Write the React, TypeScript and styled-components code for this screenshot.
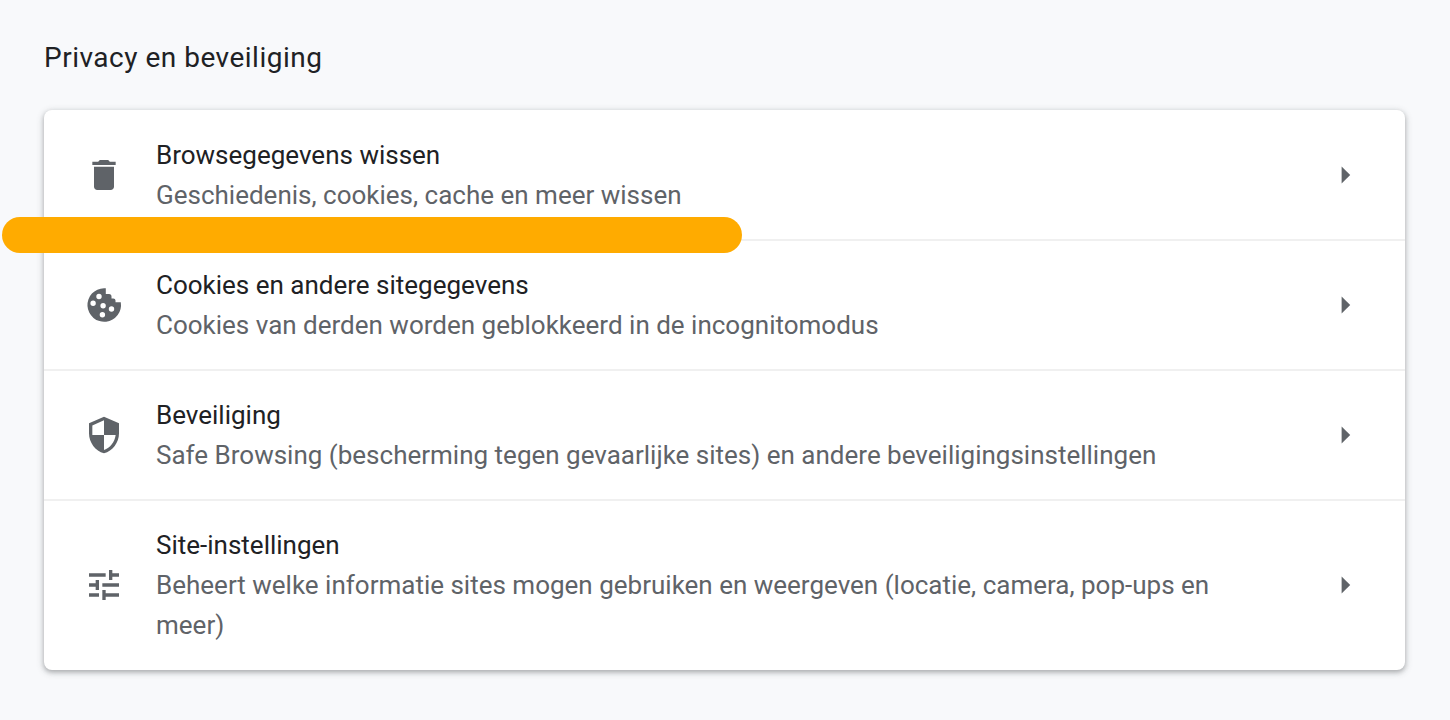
import React from "react";
import styled, { createGlobalStyle } from "styled-components";

const GlobalStyle = createGlobalStyle`
  * { box-sizing: border-box; }
  body {
    margin: 0;
    background: #f8f9fb;
    color: #202124;
    font-family: Roboto, "Liberation Sans", sans-serif;
    font-size: 26px;
    line-height: 40px;
  }
`;

const Page = styled.main`
  padding: 38px 45px 50px 44px;
`;

const Heading = styled.h2`
  margin: 0 0 32px;
  font-size: 28px;
  font-weight: 400;
  line-height: 40px;
  letter-spacing: 0.5px;
`;

const Card = styled.ul`
  list-style: none;
  margin: 0;
  padding: 1px 0;
  background: #fff;
  border-radius: 8px;
  box-shadow: 0 2px 4px rgba(60, 64, 67, 0.3), 0 2px 6px 2px rgba(60, 64, 67, 0.15);
`;

const Item = styled.li`
  position: relative;
  & + & { border-top: 2px solid #f0f0f0; }
`;

const Row = styled.button`
  display: flex;
  align-items: center;
  width: 100%;
  padding: 24px 40px;
  border: 0;
  background: none;
  color: inherit;
  font: inherit;
  text-align: left;
  cursor: pointer;
`;

const IconBox = styled.span`
  display: flex;
  flex: none;
  width: 40px;
  height: 40px;
  margin-right: 32px;
  color: #5f6368;
  svg { width: 40px; height: 40px; fill: currentColor; }
`;

const Labels = styled.span`
  flex: 1;
  min-width: 0;
  padding-right: 96px;
`;

const Title = styled.span`
  display: block;
`;

const Description = styled.span`
  display: block;
  color: #5f6368;
`;

const Arrow = styled.svg`
  flex: none;
  width: 40px;
  height: 40px;
  fill: #5f6368;
`;

const Marker = styled.div`
  position: absolute;
  z-index: 1;
  top: 106px;
  left: -42px;
  width: 740px;
  height: 36px;
  border-radius: 18px;
  background: #ffab00;
`;

const TrashIcon = () => (
  <svg viewBox="0 0 24 24" aria-hidden="true">
    <path d="M6 19c0 1.1.9 2 2 2h8c1.1 0 2-.9 2-2V7H6v12zM19 4h-3.500l-1-1h-5l-1 1H5v2h14V4z" />
  </svg>
);

const CookieIcon = () => (
  <svg viewBox="0 0 40 40" aria-hidden="true">
    <path
      fillRule="evenodd"
      d="M20 3.200A16.800 16.800 0 1 0 36.800 17.200H31.500V15.600Q31.500 13.400 29.300 13.400H27.500V11.500Q27.500 9 25 9H21.800V3.300Q21 3.200 20 3.200zM12.300 11.500a2.700 2.700 0 1 0 5.400 0a2.700 2.700 0 1 0-5.400 0zM6.400 18.200a2.700 2.700 0 1 0 5.400 0a2.700 2.700 0 1 0-5.400 0zM16.400 20.700a2.700 2.700 0 1 0 5.400 0a2.700 2.700 0 1 0-5.400 0zM24.800 24a2.700 2.700 0 1 0 5.400 0a2.700 2.700 0 1 0-5.400 0zM15.700 29.800a2.700 2.700 0 1 0 5.400 0a2.700 2.700 0 1 0-5.400 0z"
    />
  </svg>
);

const ShieldIcon = () => (
  <svg viewBox="0 0 24 24" aria-hidden="true">
    <path d="M12 1L3 5v6c0 5.550 3.840 10.740 9 12 5.160-1.260 9-6.450 9-12V5l-9-4zm0 10.990h7c-.53 4.120-3.280 7.790-7 8.940V12H5V6.300l7-3.110v8.800z" />
  </svg>
);

const TuneIcon = () => (
  <svg viewBox="0 0 24 24" aria-hidden="true">
    <path d="M3 17v2h6v-2H3zM3 5v2h10V5H3zm10 16v-2h8v-2h-8v-2h-2v6h2zM7 9v2H3v2h4v2h2V9H7zm14 4v-2H11v2h10zm-6-4h2V7h4V5h-4V3h-2v6z" />
  </svg>
);

const rows = [
  {
    icon: <TrashIcon />,
    title: "Browsegegevens wissen",
    description: "Geschiedenis, cookies, cache en meer wissen",
    marked: true,
  },
  {
    icon: <CookieIcon />,
    title: "Cookies en andere sitegegevens",
    description: "Cookies van derden worden geblokkeerd in de incognitomodus",
  },
  {
    icon: <ShieldIcon />,
    title: "Beveiliging",
    description: "Safe Browsing (bescherming tegen gevaarlijke sites) en andere beveiligingsinstellingen",
  },
  {
    icon: <TuneIcon />,
    title: "Site-instellingen",
    description:
      "Beheert welke informatie sites mogen gebruiken en weergeven (locatie, camera, pop-ups en meer)",
  },
];

export default function App() {
  return (
    <>
      <GlobalStyle />
      <Page>
        <Heading>Privacy en beveiliging</Heading>
        <Card>
          {rows.map((row) => (
            <Item key={row.title}>
              <Row type="button">
                <IconBox>{row.icon}</IconBox>
                <Labels>
                  <Title>{row.title}</Title>
                  <Description>{row.description}</Description>
                </Labels>
                <Arrow viewBox="0 0 40 40" aria-hidden="true">
                  <path d="M16.600 11.400L25.200 20L16.600 28.600z" />
                </Arrow>
              </Row>
              {row.marked && <Marker />}
            </Item>
          ))}
        </Card>
      </Page>
    </>
  );
}
